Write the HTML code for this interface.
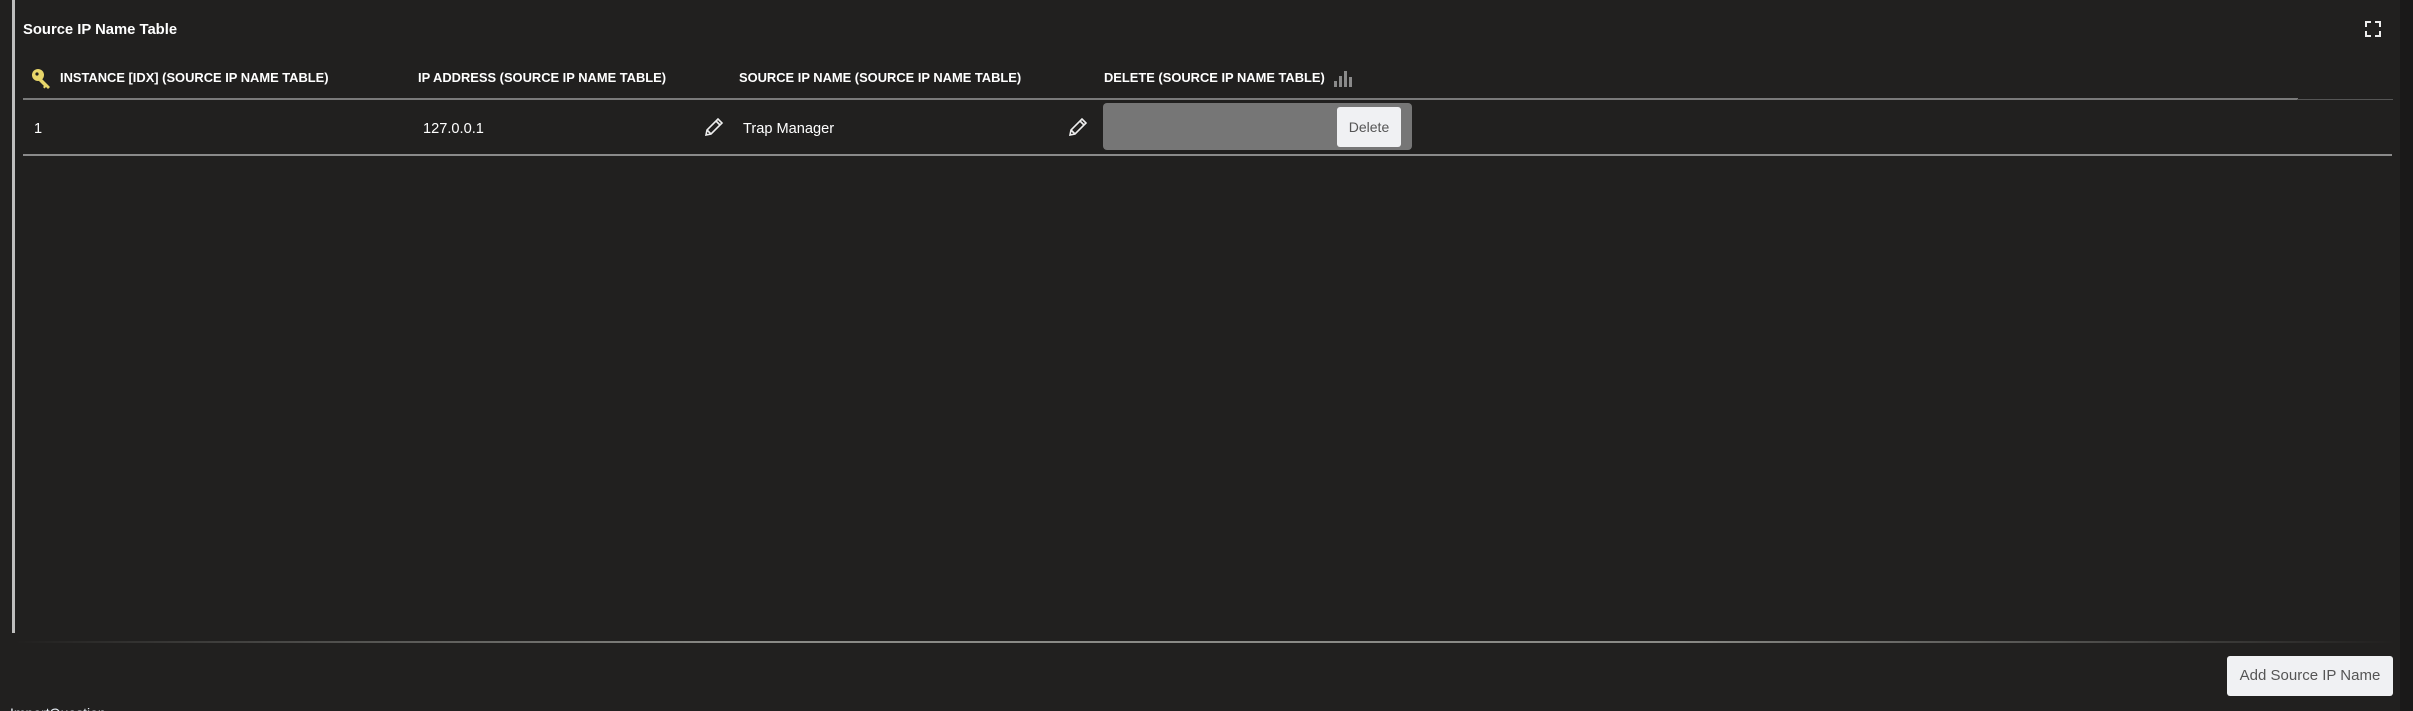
<!DOCTYPE html>
<html><head><meta charset="utf-8"><style>
html,body{margin:0;padding:0;background:#21201f;width:2413px;height:711px;overflow:hidden;font-family:"Liberation Sans",sans-serif;color:#fff;position:relative}
.a{position:absolute;white-space:nowrap}
.h{font-weight:bold;font-size:12.9px;top:70px}
.c{font-size:14.6px;top:121px}
</style></head><body>
<div class="a" style="left:12px;top:0;width:3px;height:633px;background:#bdbdbd"></div>
<div class="a" style="left:2400px;top:0;width:13px;height:711px;background:#1a1919"></div>
<div class="a" style="left:23px;top:22px;font-weight:bold;font-size:14.8px">Source IP Name Table</div>
<svg class="a" style="left:2365px;top:21px" width="16" height="16" viewBox="0 0 16 16" fill="none" stroke="#eee" stroke-width="2"><path d="M1 6V1h5M10 1h5v5M15 10v5h-5M6 15H1v-5"/></svg>
<svg class="a" style="left:31px;top:68px" width="22" height="22" viewBox="0 0 22 22"><circle cx="7" cy="7" r="6" fill="#e8d66a"/><path d="M10 10l9 9-2 2-2-2-1.5 1.5L12 19l1-1-5-5z" fill="#e8d66a"/><circle cx="6" cy="6" r="1.6" fill="#21201f"/></svg>
<div class="a h" style="left:60px">INSTANCE [IDX] (SOURCE IP NAME TABLE)</div>
<div class="a h" style="left:418px">IP ADDRESS (SOURCE IP NAME TABLE)</div>
<div class="a h" style="left:739px">SOURCE IP NAME (SOURCE IP NAME TABLE)</div>
<div class="a h" style="left:1104px">DELETE (SOURCE IP NAME TABLE)</div>
<svg class="a" style="left:1334px;top:71px" width="20" height="16" viewBox="0 0 20 16" fill="#8a8a8a"><rect x="0" y="10" width="3" height="6"/><rect x="5" y="5" width="3" height="11"/><rect x="10" y="0" width="3" height="16"/><rect x="15" y="6" width="3" height="10"/></svg>
<div class="a" style="left:23px;top:98px;width:2275px;height:2px;background:#7a7a7a"></div>
<div class="a" style="left:2297px;top:99px;width:96px;height:1px;background:#555"></div>
<div class="a c" style="left:34px">1</div>
<div class="a c" style="left:423px">127.0.0.1</div>
<svg class="a" style="left:703px;top:117px" width="21" height="21" viewBox="0 0 21 21" fill="none" stroke="#eee" stroke-width="1.6"><path d="M3 18l1-5L15 2l4 4L8 17zM13 4l4 4M4 13l4 4"/></svg>
<div class="a c" style="left:743px">Trap Manager</div>
<svg class="a" style="left:1067px;top:117px" width="21" height="21" viewBox="0 0 21 21" fill="none" stroke="#eee" stroke-width="1.6"><path d="M3 18l1-5L15 2l4 4L8 17zM13 4l4 4M4 13l4 4"/></svg>
<div class="a" style="left:1103px;top:103px;width:309px;height:47px;background:#767676;border-radius:4px"></div>
<div class="a" style="left:1337px;top:107px;width:64px;height:40px;background:#f0f1f3;border-radius:3px;color:#555;font-size:14px;line-height:40px;text-align:center">Delete</div>
<div class="a" style="left:23px;top:154px;width:2369px;height:2px;background:#8a8a8a"></div>
<div class="a" style="left:15px;top:641px;width:2380px;height:2px;background:linear-gradient(90deg,rgba(120,120,120,0),#8a8a86 30%,#8a8a86 70%,rgba(120,120,120,0))"></div>
<div class="a" style="left:2227px;top:656px;width:166px;height:40px;background:#f0f1f3;border-radius:3px;color:#555;font-size:15px;line-height:40px;text-align:center">Add Source IP Name</div>
<div class="a" style="left:10px;top:705px;font-size:14px;color:#e8eef5">ImportQuestion</div>
</body></html>
